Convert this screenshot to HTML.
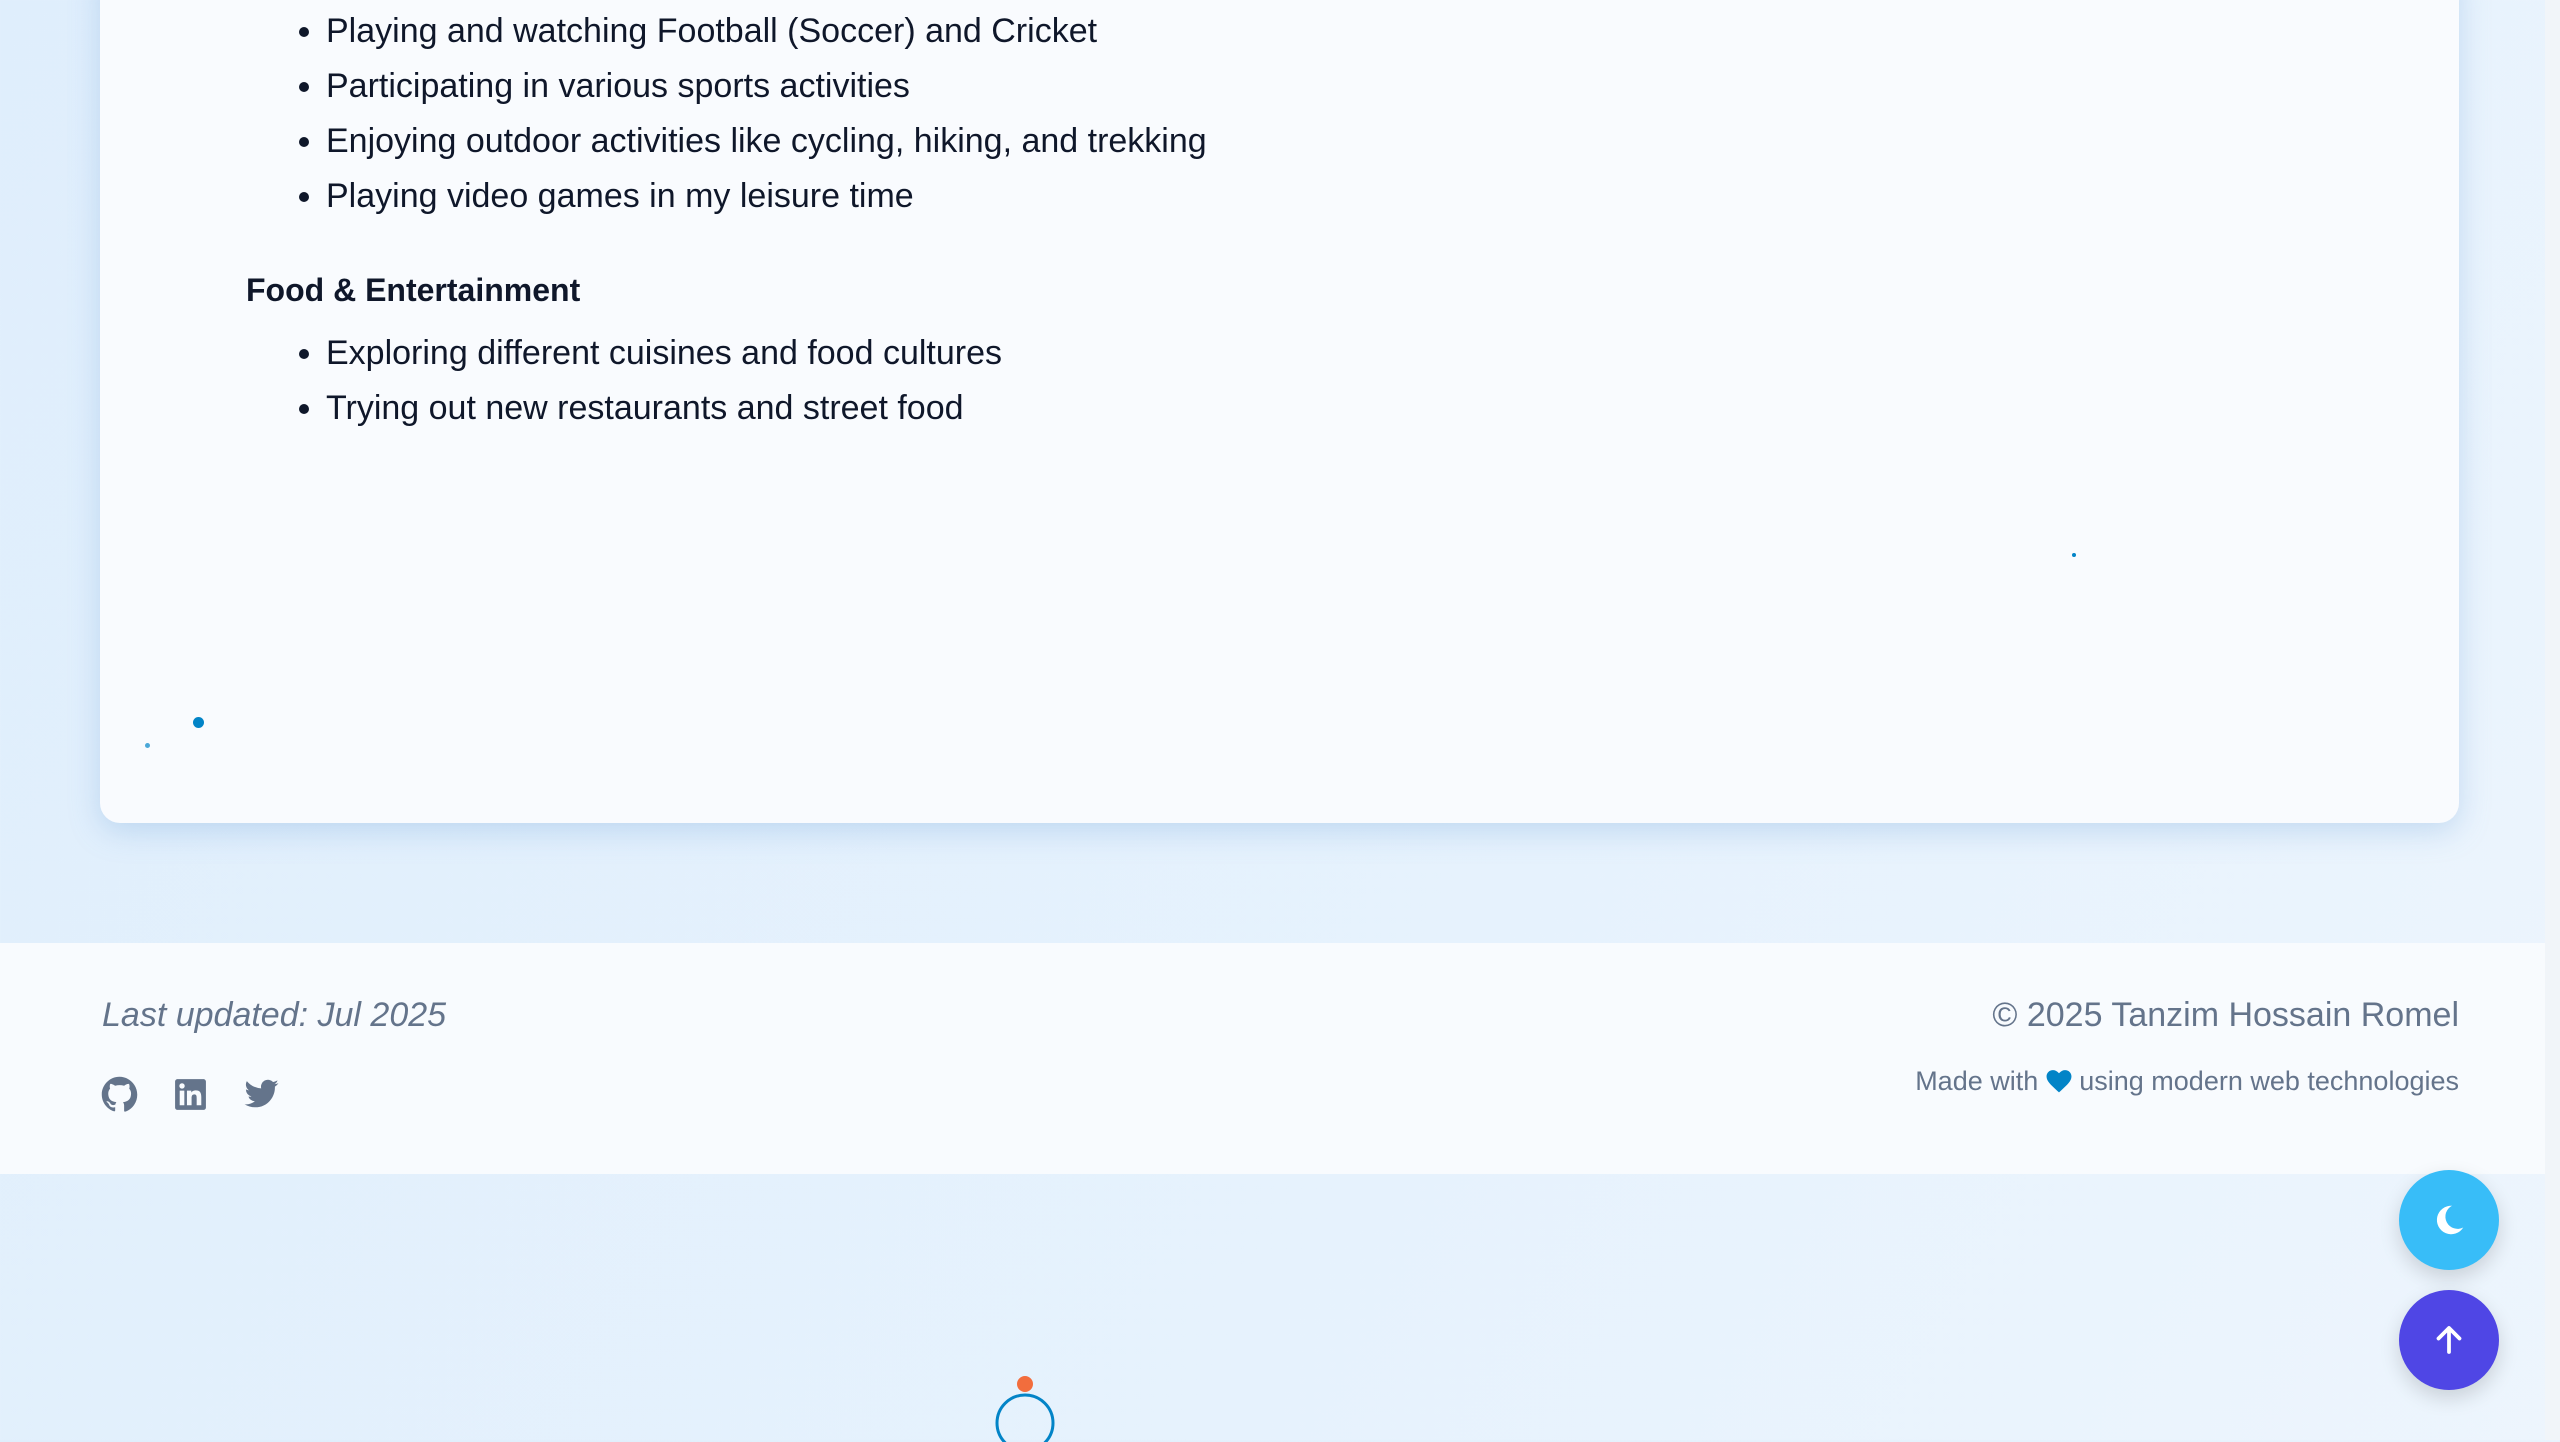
<!DOCTYPE html>
<html><head><meta charset="utf-8"><style>
html,body{margin:0;padding:0;}
body{width:2560px;height:1440px;overflow:hidden;position:relative;font-family:"Liberation Sans",sans-serif;background:linear-gradient(120deg,#dfeefc 0%,#e6f2fd 60%,#edf5fd 100%);}
.card{position:absolute;left:100px;top:-40px;width:2359px;height:863px;background:#f9fbfe;border-radius:20px;box-shadow:0 8px 30px rgba(120,170,220,.35);}
ul{position:absolute;left:280px;margin:0;padding:0 0 0 46px;list-style:disc;color:#0f172a;font-size:34px;}
li{height:55px;line-height:55px;}
h3{position:absolute;left:246px;top:269px;margin:0;font-size:32px;font-weight:bold;color:#0f172a;line-height:42px;}
.dot{position:absolute;border-radius:50%;background:#0284c7;}
.footer{position:absolute;left:0;top:943px;width:2545px;height:231px;background:#f8fbfe;}
.upd{position:absolute;left:102px;top:996px;font-style:italic;font-size:34px;color:#64748b;}
.copy{position:absolute;right:101px;top:996px;font-size:34px;color:#64748b;}
.made{position:absolute;right:101px;top:1066px;font-size:27px;color:#64748b;}
.btn{position:absolute;left:2399px;width:100px;height:100px;border-radius:50%;box-shadow:0 8px 20px rgba(0,0,0,.15);display:flex;align-items:center;justify-content:center;}
.sb{position:absolute;right:0;top:0;width:15px;height:1440px;background:#f1f5f9;}
</style></head><body>
<div class="card"></div>
<ul style="top:4px">
<li>Playing and watching Football (Soccer) and Cricket</li>
<li>Participating in various sports activities</li>
<li>Enjoying outdoor activities like cycling, hiking, and trekking</li>
<li>Playing video games in my leisure time</li>
</ul>
<h3>Food &amp; Entertainment</h3>
<ul style="top:326px">
<li>Exploring different cuisines and food cultures</li>
<li>Trying out new restaurants and street food</li>
</ul>
<div class="dot" style="left:2072px;top:553px;width:4px;height:4px"></div>
<div class="dot" style="left:193px;top:717px;width:11px;height:11px"></div>
<div class="dot" style="left:145px;top:743px;width:5px;height:5px;opacity:.7"></div>
<div class="footer"></div>
<div class="upd">Last updated: Jul 2025</div>
<svg style="position:absolute;left:101px;top:1076px" width="37" height="37" viewBox="0 0 24 24" fill="#64748b"><path d="M12 .5C5.7.5.5 5.7.5 12c0 5.1 3.3 9.4 7.9 10.9.6.1.8-.2.8-.6v-2c-3.2.7-3.900-1.5-3.900-1.5-.5-1.300-1.300-1.700-1.300-1.700-1-.7.1-.7.1-.7 1.2.1 1.8 1.2 1.8 1.2 1 1.8 2.7 1.3 3.4 1 .1-.8.4-1.3.7-1.6-2.600-.3-5.300-1.300-5.300-5.700 0-1.300.5-2.300 1.200-3.100-.1-.3-.5-1.500.1-3.100 0 0 1-.3 3.200 1.200a11 11 0 0 1 5.800 0c2.200-1.500 3.200-1.200 3.200-1.200.6 1.600.2 2.800.1 3.100.7.8 1.200 1.800 1.200 3.100 0 4.400-2.700 5.400-5.300 5.700.4.4.8 1.100.8 2.200v3.300c0 .3.2.7.8.6A11.5 11.5 0 0 0 23.5 12C23.5 5.7 18.3.5 12 .5z"/></svg>
<svg style="position:absolute;left:172px;top:1076px" width="37" height="37" viewBox="0 0 24 24" fill="#64748b"><path d="M20.4 2H3.6C2.7 2 2 2.7 2 3.6v16.8c0 .9.7 1.6 1.6 1.6h16.8c.9 0 1.6-.7 1.6-1.6V3.6c0-.9-.7-1.6-1.6-1.6zM8 19H5V9.5h3V19zM6.5 8.2a1.7 1.7 0 1 1 0-3.5 1.7 1.7 0 0 1 0 3.5zM19 19h-3v-4.6c0-1.1 0-2.5-1.5-2.5s-1.8 1.2-1.8 2.4V19h-3V9.5h2.8v1.3c.4-.8 1.4-1.5 2.9-1.5 3.1 0 3.6 2 3.6 4.6V19z"/></svg>
<svg style="position:absolute;left:243px;top:1076px" width="37" height="37" viewBox="0 0 24 24" fill="#64748b"><path d="M23 4.6c-.8.4-1.7.6-2.6.7a4.5 4.5 0 0 0 2-2.5c-.9.5-1.9.9-2.9 1.1a4.5 4.5 0 0 0-7.7 4.1A12.8 12.8 0 0 1 2.5 3.3a4.5 4.5 0 0 0 1.4 6 4.5 4.5 0 0 1-2-.6v.1a4.5 4.5 0 0 0 3.6 4.4 4.5 4.5 0 0 1-2 .1 4.5 4.5 0 0 0 4.2 3.1A9 9 0 0 1 1 18.3a12.8 12.8 0 0 0 6.9 2c8.3 0 12.8-6.9 12.8-12.8v-.6c.9-.6 1.7-1.4 2.3-2.3z"/></svg>
<div class="copy">© 2025 Tanzim Hossain Romel</div>
<div class="made">Made with <svg width="26" height="24" viewBox="0 0 24 22" style="vertical-align:-3px"><path d="M12 21.5 10.3 20C4.2 14.4.5 11.1.5 6.9.5 3.5 3.1 1 6.4 1c1.9 0 3.8.9 5.6 2.8C13.8 1.9 15.7 1 17.6 1c3.3 0 5.9 2.5 5.9 5.900 0 4.200-3.700 7.500-9.800 13.100z" fill="#0284c7"/></svg> using modern web technologies</div>
<div class="btn" style="top:1170px;background:#38bdf8"><svg width="36" height="36" viewBox="0 0 24 24"><path d="M14 2.5A9.5 9.5 0 1 0 21.5 17 8 8 0 0 1 14 2.5z" fill="#fff"/></svg></div>
<div class="btn" style="top:1290px;background:#4f46e5"><svg width="36" height="36" viewBox="0 0 24 24" fill="none" stroke="#fff" stroke-width="2.5" stroke-linecap="round" stroke-linejoin="round"><path d="M12 20V4M5 11l7-7 7 7"/></svg></div>
<svg style="position:absolute;left:990px;top:1372px" width="70" height="70"><circle cx="35" cy="51" r="28" fill="none" stroke="#0284c7" stroke-width="3"/><circle cx="35" cy="12" r="8" fill="#f26d3d"/></svg>
<div class="sb"></div>
</body></html>
